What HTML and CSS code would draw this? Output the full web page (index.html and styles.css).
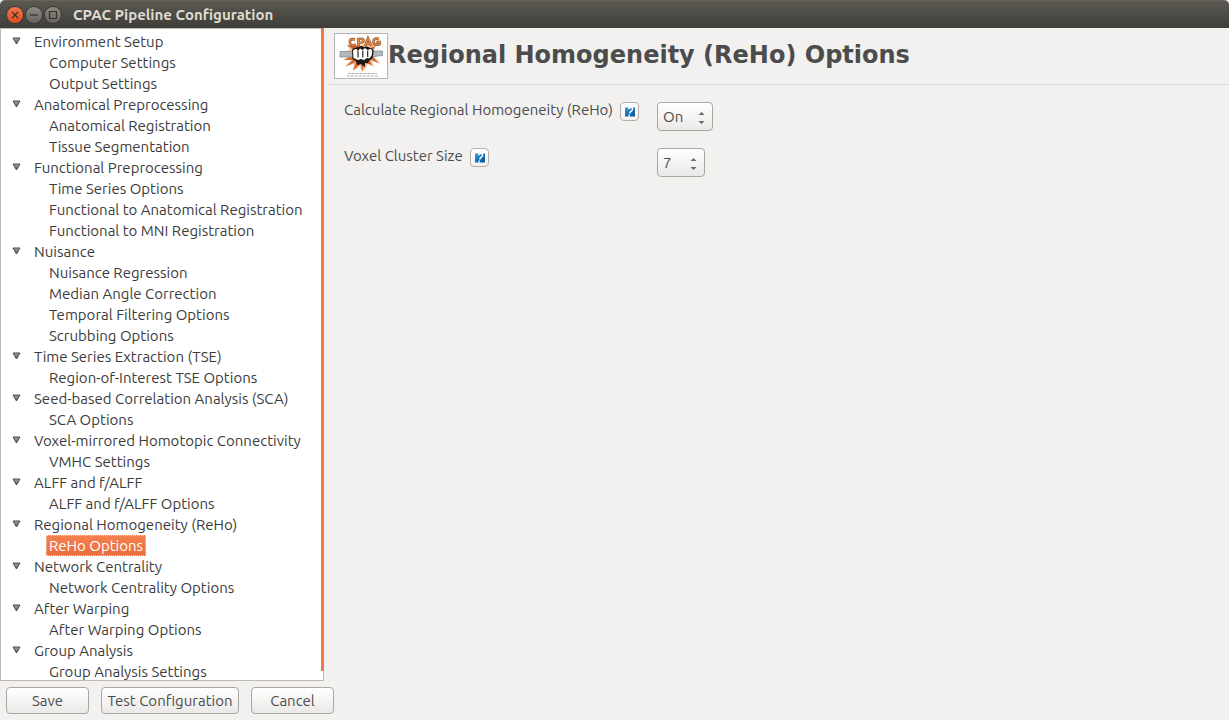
FILE: index.html
```html
<!DOCTYPE html>
<html lang="en">
<head>
<meta charset="utf-8">
<title>CPAC Pipeline Configuration</title>
<link rel="stylesheet" href="styles.css">
</head>
<body>
<svg class="defs" aria-hidden="true">
  <defs>
    <linearGradient id="tri" x1="0" y1="0" x2="0" y2="1"><stop offset="0" stop-color="#a5a5a3"/><stop offset="1" stop-color="#5a5a58"/></linearGradient>
    <linearGradient id="blue" x1="0" y1="0" x2="1" y2="1"><stop offset="0" stop-color="#3aa3dc"/><stop offset="0.500" stop-color="#1673b8"/><stop offset="1" stop-color="#08508f"/></linearGradient>
    <symbol id="arrow" viewBox="0 0 9 8"><path d="M1 1H8L4.500 7Z" fill="url(#tri)" stroke="#4a4a48" stroke-width="1"/></symbol>
    <symbol id="help" viewBox="0 0 10 10"><path d="M0 0.500H10V9.500H0Z" fill="url(#blue)"/><path d="M3.600 2.200Q4.200 0.300 6 0.300Q8 0.500 7.400 2.800Q6.800 4.400 5.300 5L4.700 6.600" fill="none" stroke="#fff" stroke-width="1.500"/><path d="M3.700 7.500H5.100L4.500 9.500H3.100Z" fill="#fff"/></symbol>
    <symbol id="updown" viewBox="0 0 7 14"><path d="M0.500 4L3.500 1L6.500 4ZM0.500 10L3.500 13L6.500 10Z" fill="#6a6a68"/></symbol>
  </defs>
</svg>
<div class="window">
  <header class="titlebar">
    <button class="control close" aria-label="Close"><svg viewBox="0 0 16 16"><path d="M5 5L11 11M11 5L5 11"/></svg></button>
    <button class="control" aria-label="Minimize"><svg viewBox="0 0 16 16"><path d="M4 8H12"/></svg></button>
    <button class="control" aria-label="Maximize"><svg viewBox="0 0 16 16"><path d="M4.500 4.500H11.500V11.500H4.500Z"/></svg></button>
    <span class="title">CPAC Pipeline Configuration</span>
  </header>
  <div class="content">
    <nav class="sidebar" aria-label="Configuration sections">
      <ul class="tree">
        <li><button class="toggle" aria-label="Collapse"><svg><use href="#arrow"/></svg></button><a href="#">Environment Setup</a>
          <ul><li><a href="#">Computer Settings</a></li><li><a href="#">Output Settings</a></li></ul></li>
        <li><button class="toggle" aria-label="Collapse"><svg><use href="#arrow"/></svg></button><a href="#">Anatomical Preprocessing</a>
          <ul><li><a href="#">Anatomical Registration</a></li><li><a href="#">Tissue Segmentation</a></li></ul></li>
        <li><button class="toggle" aria-label="Collapse"><svg><use href="#arrow"/></svg></button><a href="#">Functional Preprocessing</a>
          <ul><li><a href="#">Time Series Options</a></li><li><a href="#">Functional to Anatomical Registration</a></li><li><a href="#">Functional to MNI Registration</a></li></ul></li>
        <li><button class="toggle" aria-label="Collapse"><svg><use href="#arrow"/></svg></button><a href="#">Nuisance</a>
          <ul><li><a href="#">Nuisance Regression</a></li><li><a href="#">Median Angle Correction</a></li><li><a href="#">Temporal Filtering Options</a></li><li><a href="#">Scrubbing Options</a></li></ul></li>
        <li><button class="toggle" aria-label="Collapse"><svg><use href="#arrow"/></svg></button><a href="#">Time Series Extraction (TSE)</a>
          <ul><li><a href="#">Region-of-Interest TSE Options</a></li></ul></li>
        <li><button class="toggle" aria-label="Collapse"><svg><use href="#arrow"/></svg></button><a href="#">Seed-based Correlation Analysis (SCA)</a>
          <ul><li><a href="#">SCA Options</a></li></ul></li>
        <li><button class="toggle" aria-label="Collapse"><svg><use href="#arrow"/></svg></button><a href="#">Voxel-mirrored Homotopic Connectivity</a>
          <ul><li><a href="#">VMHC Settings</a></li></ul></li>
        <li><button class="toggle" aria-label="Collapse"><svg><use href="#arrow"/></svg></button><a href="#">ALFF and f/ALFF</a>
          <ul><li><a href="#">ALFF and f/ALFF Options</a></li></ul></li>
        <li><button class="toggle" aria-label="Collapse"><svg><use href="#arrow"/></svg></button><a href="#">Regional Homogeneity (ReHo)</a>
          <ul><li><a href="#" class="selected" aria-current="page">ReHo Options</a></li></ul></li>
        <li><button class="toggle" aria-label="Collapse"><svg><use href="#arrow"/></svg></button><a href="#">Network Centrality</a>
          <ul><li><a href="#">Network Centrality Options</a></li></ul></li>
        <li><button class="toggle" aria-label="Collapse"><svg><use href="#arrow"/></svg></button><a href="#">After Warping</a>
          <ul><li><a href="#">After Warping Options</a></li></ul></li>
        <li><button class="toggle" aria-label="Collapse"><svg><use href="#arrow"/></svg></button><a href="#">Group Analysis</a>
          <ul><li><a href="#">Group Analysis Settings</a></li></ul></li>
      </ul>
      <div class="scrollbar"></div>
    </nav>
    <main class="page">
      <div class="heading">
        <svg class="logo" viewBox="0 0 54 46" role="img" aria-label="CPAC logo">
          <rect x="0.500" y="0.500" width="53" height="45" fill="#fff" stroke="#b5b5b8"/>
          <path d="M12 11L18 15L22 12L36 12L43 11L40 17L44 19L40 24L47 31L38 28L40 34L34 31L31 36L28 39L26 33L19 38L20 31L11 34L17 27L9 27L15 23L11 18L16 17Z" fill="#f5c19a"/>
          <path d="M13 12L20 17L16 24L10 27L19 27L12 33L22 29L19 37L27 31L28 38L31 30L38 32L35 26L45 30L37 22L41 13L34 16L28 13Z" fill="#d06a30"/>
          <path d="M6 18.500H20V24H6ZM36 18H48.500V22.500L36 24Z" fill="#b4b8ba" stroke="#8b8e90" stroke-width="0.800"/>
          <path d="M18 17Q19 14 23 14.500Q27 12.500 30 14Q34 12.500 36 15Q40 15 39.500 20L38.500 25L35 28L34 30L31 30L31 34L27 31L23 32L22 28L18.500 26Z" fill="#1c1815"/>
          <path d="M19 18Q20 15.500 22.500 16L24 18L26 15.500L28.500 17L31 15L33.500 17L36 16Q38.500 16 38.200 19L37.500 23L35 25.500L33 25L30 27L27 26L24 27L19.500 25Z" fill="#fff"/>
          <path d="M24 18V24.500M28.800 17.500V24.500M33.700 17.500V24" fill="none" stroke="#1c1815" stroke-width="1.100"/>
          <g fill="none" stroke="#7a4526" stroke-width="2.600"><path d="M21 6.500Q15 5 16 10Q17 13.500 22 11.500M24.500 13.500V6Q30 5 29.500 8Q29 10 25 10M31 13L34 5.500L37.500 13M32 10.500H36.500M45 6Q39 4.500 39.500 9.500Q41 13 45.500 11V9H42.500"/></g>
          <g fill="none" stroke="#e98a42" stroke-width="1.500"><path d="M21 6.500Q15 5 16 10Q17 13.500 22 11.500M24.500 13.500V6Q30 5 29.500 8Q29 10 25 10M31 13L34 5.500L37.500 13M32 10.500H36.500M45 6Q39 4.500 39.500 9.500Q41 13 45.500 11V9H42.500"/></g>
          <path d="M14 40.500H43M13 43H45" stroke="#aaaaae" stroke-width="1" stroke-dasharray="2 0.500 1 0.500"/>
        </svg>
        <h1>Regional Homogeneity (ReHo) Options</h1>
      </div>
      <form class="options">
        <div class="field"><label for="reho">Calculate Regional Homogeneity (ReHo)</label><button type="button" class="help" aria-label="Help for Calculate Regional Homogeneity"><svg><use href="#help"/></svg></button></div>
        <div class="select"><select id="reho"><option>On</option><option>Off</option></select><svg><use href="#updown"/></svg></div>
        <div class="field"><label for="cluster">Voxel Cluster Size</label><button type="button" class="help" aria-label="Help for Voxel Cluster Size"><svg><use href="#help"/></svg></button></div>
        <div class="select narrow"><select id="cluster"><option>7</option><option>19</option><option>27</option></select><svg><use href="#updown"/></svg></div>
      </form>
    </main>
  </div>
  <footer class="actions">
    <button class="button">Save</button>
    <button class="button wide">Test Configuration</button>
    <button class="button">Cancel</button>
  </footer>
</div>
</body>
</html>
```
FILE: styles.css
```css
* { box-sizing: border-box; }
body {
  margin: 0;
  background: #f2f1f0;
  color: #3c3c3c;
  font-family: Ubuntu, "Noto Sans", sans-serif;
  font-size: 15px;
  line-height: 21px;
}
button, select { font: inherit; color: inherit; margin: 0; }
ul { list-style: none; margin: 0; padding: 0; }
svg { display: block; }
.defs { position: absolute; width: 0; height: 0; }
.window { display: flex; flex-direction: column; height: 100vh; }
.titlebar {
  flex: none;
  display: flex;
  align-items: center;
  gap: 3px;
  height: 28px;
  padding: 0 7px;
  background: linear-gradient(#5b5952, #3e3d39);
  border-top: 1px solid #65635b;
  border-radius: 5px 5px 0 0;
}
.control {
  width: 16px;
  height: 16px;
  padding: 0;
  border: 0;
  border-radius: 50%;
  background: linear-gradient(#8c8a82, #65635d);
  box-shadow: 0 0 0 1px #383732;
}
.control svg { width: 16px; height: 16px; fill: none; stroke: #35342f; stroke-width: 1.2px; }
.close { background: linear-gradient(#f5774f, #df4b1d); }
.title { margin-left: 9px; color: #dfdbd2; font-weight: 700; }
.content { flex: 1; min-height: 0; display: flex; }
.sidebar {
  position: relative;
  flex: none;
  width: 324px;
  padding-top: 2px;
  background: #fff;
  border: 1px solid #bdb9b5;
}
.tree { height: 100%; overflow: hidden; }
.tree > li { display: grid; grid-template-columns: 33px 1fr; }
.tree ul { grid-column: 1 / -1; padding-left: 45px; }
.tree ul li { display: flex; }
.tree a { color: inherit; text-decoration: none; white-space: nowrap; }
.tree ul a { height: 21px; padding: 0 3px; }
.tree .selected {
  color: #fff;
  background: linear-gradient(#f58250, #ea6c3b);
  outline: 1px dotted #fbd0bb;
  outline-offset: -1px;
}
.toggle { height: 21px; padding: 6px 0 0 11px; border: 0; background: none; align-self: start; }
.toggle svg { width: 9px; height: 8px; margin-bottom: 7px; }
.scrollbar { position: absolute; top: -1px; right: -1px; bottom: 9px; width: 3px; background: #f07746; }
.page { flex: 1; min-width: 0; padding-left: 5px; }
.heading {
  display: flex;
  align-items: center;
  height: 57px;
  padding: 0 5px;
  border-bottom: 1px solid #d9d7d5;
}
.logo { flex: none; width: 54px; height: 46px; }
h1 {
  margin: 0;
  padding-bottom: 2px;
  color: #4c4c4c;
  font: 700 24px/30px "DejaVu Sans", sans-serif;
}
.options {
  display: grid;
  grid-template-columns: 313px 1fr;
  row-gap: 17px;
  padding: 17px 15px;
  color: #4c4c4c;
}
.field { display: flex; align-items: flex-start; gap: 7px; line-height: 16px; white-space: nowrap; }
.help {
  width: 19px;
  height: 19px;
  padding: 0 0 0 4px;
  border: 1px solid #b3afab;
  border-radius: 4px;
  background: linear-gradient(#fff, #f4f3f2);
}
.help svg { width: 10px; height: 10px; }
.select { position: relative; width: 56px; height: 29px; }
.narrow { width: 48px; }
.select select {
  appearance: none;
  width: 100%;
  height: 100%;
  padding: 0 5px;
  border: 1px solid #aaa6a2;
  border-radius: 4px;
  background: linear-gradient(#fff, #ebe9e7);
}
.select svg { position: absolute; right: 8px; top: 9px; width: 7px; height: 14px; pointer-events: none; }
.actions { flex: none; display: flex; gap: 12px; padding: 6px; }
.button {
  width: 83px;
  height: 27px;
  padding: 0 4px;
  border: 1px solid #aaa6a2;
  border-radius: 4px;
  background: linear-gradient(#fff, #ebe9e7);
  line-height: 25px;
  color: #4c4c4c;
}
.wide { width: 138px; white-space: nowrap; }
```
